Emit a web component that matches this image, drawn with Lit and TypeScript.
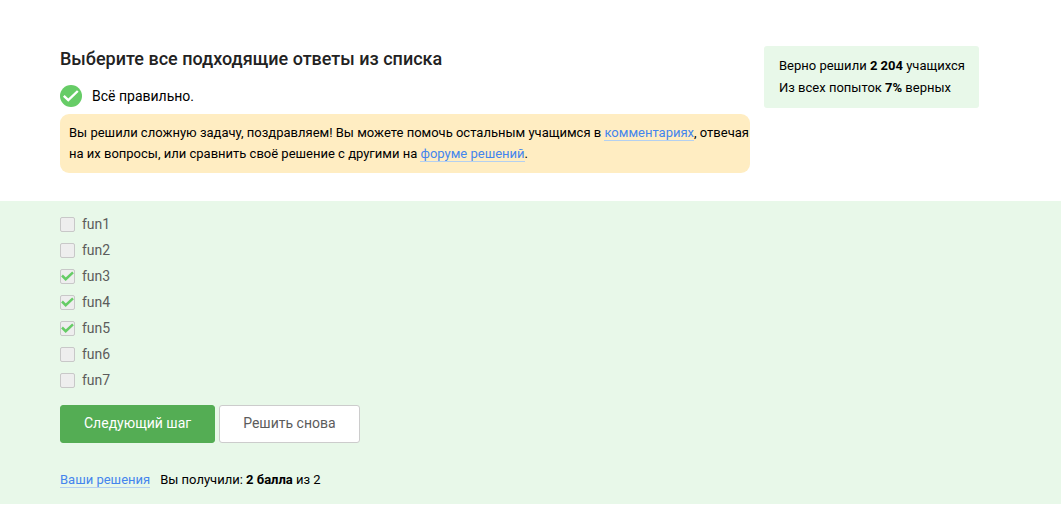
import { LitElement, html, css, nothing } from "lit";
import { customElement, state } from "lit/decorators.js";

interface Option {
  label: string;
  checked: boolean;
}

@customElement("app-root")
export class AppRoot extends LitElement {
  @state() private options: Option[] = [1, 2, 3, 4, 5, 6, 7].map((n) => ({
    label: `fun${n}`,
    checked: n >= 3 && n <= 5,
  }));

  static styles = css`
    :host {
      display: block;
      font-family: Roboto, "Liberation Sans", sans-serif;
      font-size: 13px;
      color: #000;
      background: #fff;
    }
    .top {
      display: flex;
      align-items: flex-start;
      gap: 14px;
      padding: 46px 82px 28px 60px;
    }
    .intro {
      flex: 1;
    }
    .title {
      margin: 0;
      font-size: 18px;
      line-height: 26px;
      font-weight: 500;
      color: #222;
    }
    .status {
      display: flex;
      align-items: center;
      gap: 10px;
      margin: 12px 0 6px;
      font-size: 14px;
      line-height: 24px;
    }
    .status-icon {
      width: 22px;
      height: 22px;
    }
    .hint {
      margin: 0;
      padding: 8px 0 9px 9px;
      border-radius: 9px;
      background: #ffedc2;
      line-height: 21px;
    }
    .link {
      color: #4485ed;
      text-decoration: none;
      border-bottom: 1px solid #b4d0f0;
    }
    .stats {
      padding: 9px 14px 9px 15px;
      border-radius: 3px;
      background: #e8f8e9;
      line-height: 22px;
    }
    .stats-line {
      margin: 0;
    }
    .quiz {
      padding: 11px 60px 14px;
      background: #e8f8e9;
    }
    .options {
      margin: 0;
      padding: 0;
      border: 0;
      display: grid;
      justify-items: start;
      gap: 2px;
    }
    .option {
      display: flex;
      align-items: center;
      gap: 7px;
      font-size: 14px;
      line-height: 24px;
      color: #5c5c5c;
    }
    .tick {
      display: grid;
    }
    .box,
    .mark {
      grid-area: 1 / 1;
      width: 15px;
      height: 15px;
    }
    .box {
      appearance: none;
      box-sizing: border-box;
      margin: 0;
      border: 1px solid #c8c8c8;
      border-radius: 2px;
      background: #eee;
    }
    .actions {
      display: flex;
      gap: 4px;
      margin-top: 13px;
    }
    .button {
      box-sizing: border-box;
      height: 38px;
      padding: 0 23px 2px;
      border: 1px solid #ccc;
      border-radius: 3px;
      background: #fff;
      color: #5c5c5c;
      font: inherit;
      font-size: 14px;
    }
    .primary {
      border-color: #54ad54;
      background: #54ad54;
      color: #fff;
    }
    .footer {
      display: flex;
      gap: 10px;
      margin-top: 26px;
      line-height: 21px;
    }
  `;

  private renderOption(option: Option) {
    return html`
      <label class="option">
        <span class="tick">
          <input class="box" type="checkbox" .checked=${option.checked} disabled />
          ${option.checked
            ? html`<svg class="mark" viewBox="0 0 15 15" aria-hidden="true">
                <path d="M2 6.500L5.700 10.200L13 3.300" fill="none" stroke="#66cc66" stroke-width="2.5" />
              </svg>`
            : nothing}
        </span>
        <span>${option.label}</span>
      </label>
    `;
  }

  render() {
    return html`
      <header class="top">
        <div class="intro">
          <h1 class="title">Выберите все подходящие ответы из списка</h1>
          <div class="status">
            <svg class="status-icon" viewBox="0 0 22 22" aria-hidden="true">
              <circle cx="11" cy="11" r="11" fill="#66cc66" />
              <path d="M3.800 10.800L8.300 15.200L17.800 6" fill="none" stroke="#fff" stroke-width="2.4" />
            </svg>
            <span>Всё правильно.</span>
          </div>
          <p class="hint">
            Вы решили сложную задачу, поздравляем! Вы можете помочь остальным учащимся в
            <a class="link" href="#comments">комментариях</a>, отвечая на их вопросы, или сравнить
            своё решение с другими на <a class="link" href="#solutions">форуме решений</a>.
          </p>
        </div>
        <aside class="stats">
          <p class="stats-line">Верно решили <b>2 204</b> учащихся</p>
          <p class="stats-line">Из всех попыток <b>7%</b> верных</p>
        </aside>
      </header>
      <main class="quiz">
        <fieldset class="options" aria-label="Ответы">
          ${this.options.map((option) => this.renderOption(option))}
        </fieldset>
        <div class="actions">
          <button class="button primary" type="button">Следующий шаг</button>
          <button class="button" type="button">Решить снова</button>
        </div>
        <div class="footer">
          <span><a class="link" href="#submissions">Ваши решения</a></span>
          <span>Вы получили: <b>2 балла</b> из 2</span>
        </div>
      </main>
    `;
  }
}
